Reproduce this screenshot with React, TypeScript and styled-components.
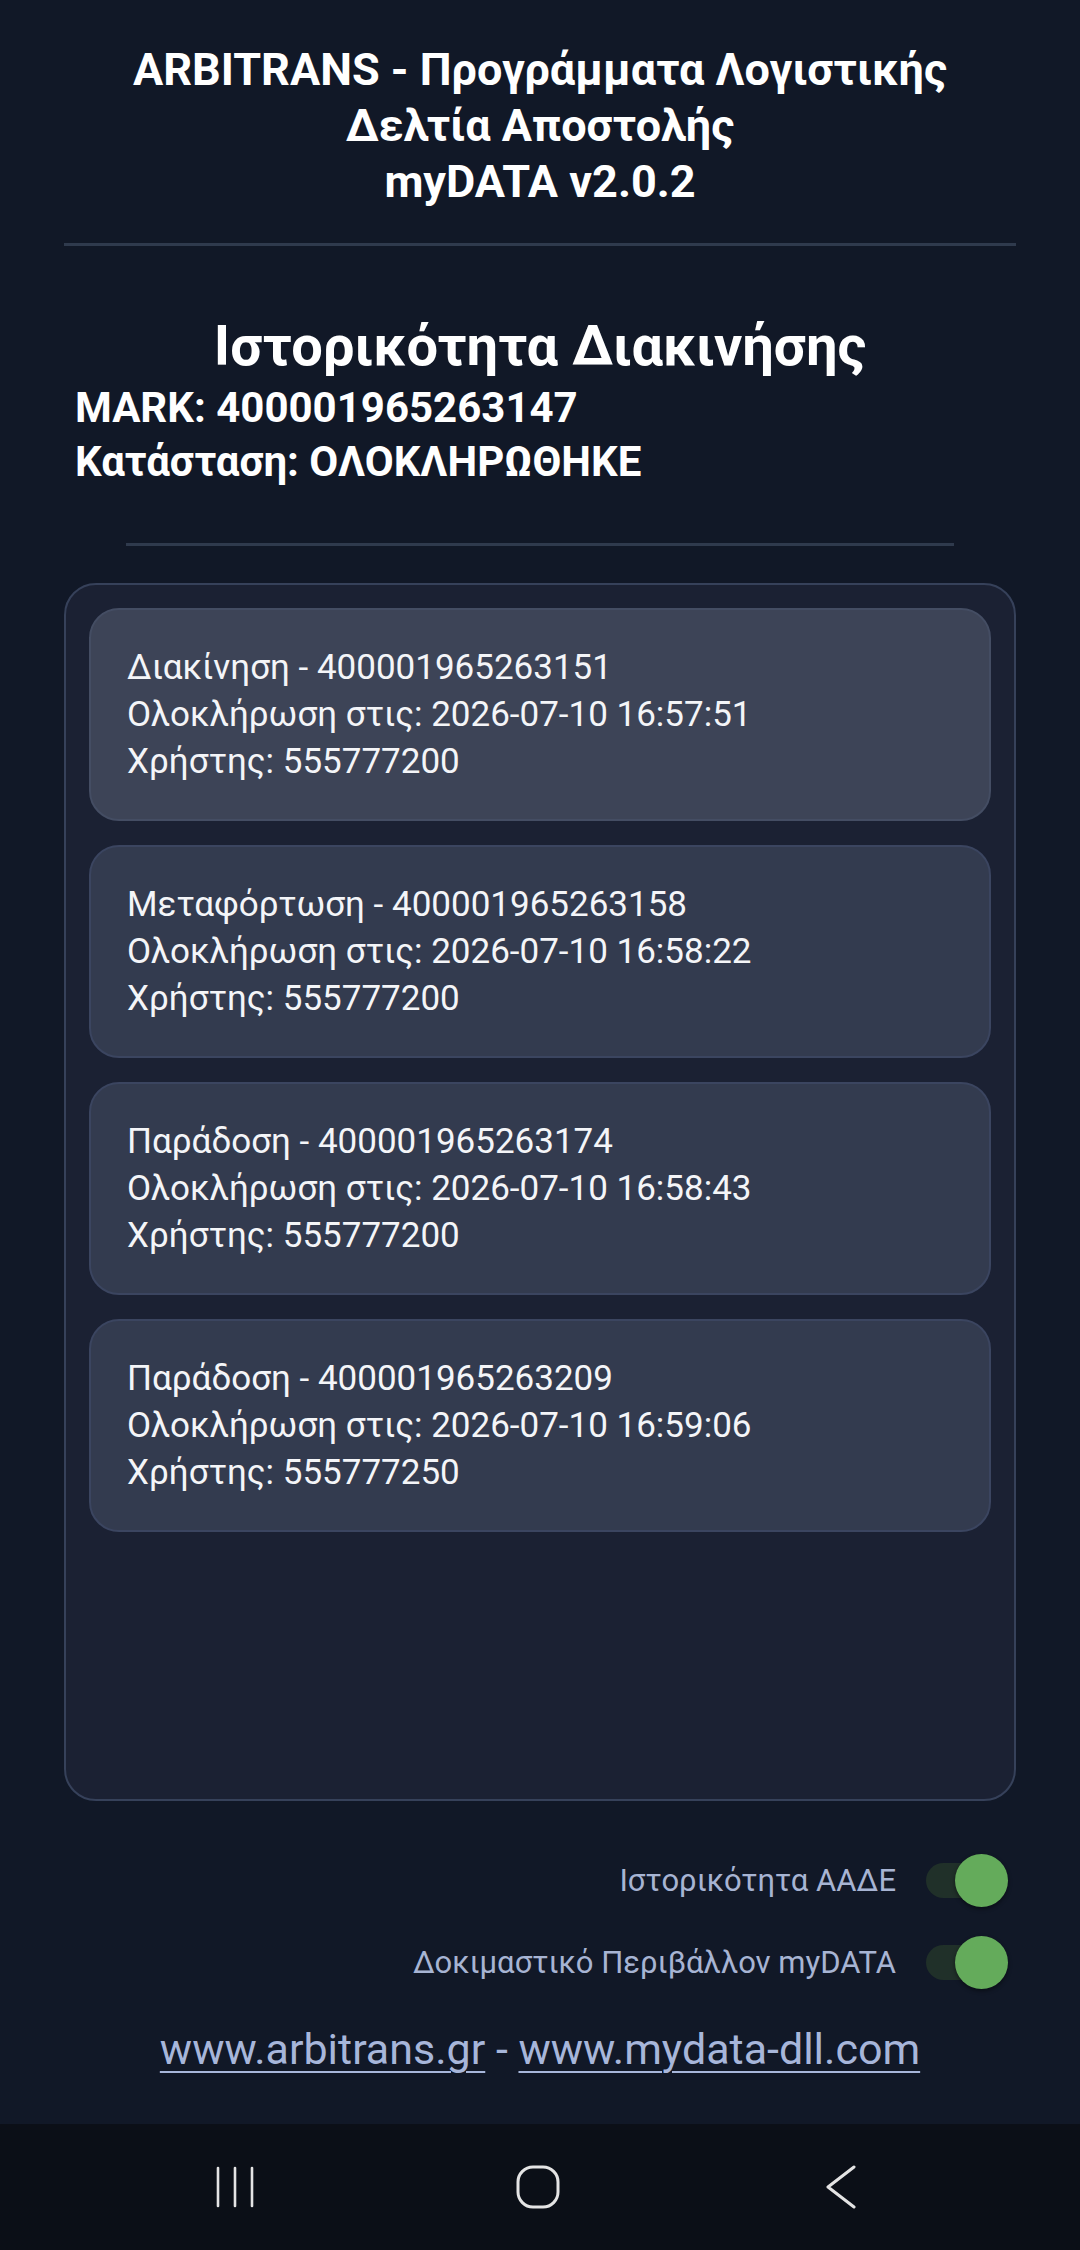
import styled, { createGlobalStyle } from 'styled-components';

const GlobalStyle = createGlobalStyle`
  html, body {
    margin: 0;
    padding: 0;
    background: #111827;
  }
  body {
    font-family: Roboto, "Noto Sans", "Liberation Sans", sans-serif;
    color: #ffffff;
  }
  * {
    box-sizing: border-box;
  }
`;

const movements = [
  { kind: 'Διακίνηση', mark: '400001965263151', done: '2026-07-10 16:57:51', user: '555777200' },
  { kind: 'Μεταφόρτωση', mark: '400001965263158', done: '2026-07-10 16:58:22', user: '555777200' },
  { kind: 'Παράδοση', mark: '400001965263174', done: '2026-07-10 16:58:43', user: '555777200' },
  { kind: 'Παράδοση', mark: '400001965263209', done: '2026-07-10 16:59:06', user: '555777250' },
];

const Toggle = ({ label }: { label: string }) => (
  <ToggleRow>
    <ToggleLabel>{label}</ToggleLabel>
    <Switch>
      <Track />
      <Thumb />
    </Switch>
  </ToggleRow>
);

export default function App() {
  return (
    <>
      <GlobalStyle />
      <Page>
        <Main>
          <Header>
            <HeaderLine>ARBITRANS - Προγράμματα Λογιστικής</HeaderLine>
            <HeaderLine>Δελτία Αποστολής</HeaderLine>
            <HeaderLine>myDATA v2.0.2</HeaderLine>
          </Header>
          <Divider />

          <Title>Ιστορικότητα Διακινήσης</Title>
          <InfoLine>MARK: 400001965263147</InfoLine>
          <InfoLine>Κατάσταση: ΟΛΟΚΛΗΡΩΘΗΚΕ</InfoLine>
          <Divider $inset />

          <ListBox>
            {movements.map((m, i) => (
              <Card key={m.mark} $active={i === 0}>
                <CardLine>{m.kind} - {m.mark}</CardLine>
                <CardLine>Ολοκλήρωση στις: {m.done}</CardLine>
                <CardLine>Χρήστης: {m.user}</CardLine>
              </Card>
            ))}
          </ListBox>

          <Toggles>
            <Toggle label="Ιστορικότητα ΑΑΔΕ" />
            <Toggle label="Δοκιμαστικό Περιβάλλον myDATA" />
          </Toggles>

          <Links>
            <Link href="#">www.arbitrans.gr</Link> - <Link href="#">www.mydata-dll.com</Link>
          </Links>
        </Main>

        <NavBar>
          <NavButton>
            <svg width="40" height="42" viewBox="0 0 40 42">
              <g stroke="#e4e4e4" strokeWidth="2.6" strokeLinecap="round">
                <line x1="3" y1="2" x2="3" y2="40" />
                <line x1="20" y1="2" x2="20" y2="40" />
                <line x1="37" y1="2" x2="37" y2="40" />
              </g>
            </svg>
          </NavButton>
          <NavButton>
            <svg width="44" height="44" viewBox="0 0 44 44">
              <rect x="2" y="2" width="40" height="40" rx="15" fill="none" stroke="#e4e4e4" strokeWidth="3" />
            </svg>
          </NavButton>
          <NavButton>
            <svg width="32" height="44" viewBox="0 0 32 44">
              <polyline points="29,2 3,22 29,42" fill="none" stroke="#e4e4e4" strokeWidth="3" strokeLinecap="round" strokeLinejoin="round" />
            </svg>
          </NavButton>
        </NavBar>
      </Page>
    </>
  );
}

const Page = styled.div`
  min-height: 2250px;
  display: flex;
  flex-direction: column;
  background: #111827;
`;

const Main = styled.main`
  flex: 1;
  display: flex;
  flex-direction: column;
  padding: 42px 64px 0 64px;
`;

const Header = styled.header`
  display: flex;
  flex-direction: column;
  align-items: center;
`;

const HeaderLine = styled.div`
  font-size: 45px;
  font-weight: 700;
  line-height: 56px;
  text-align: center;
  white-space: nowrap;
`;

const Divider = styled.hr<{ $inset?: boolean }>`
  border: none;
  height: 3px;
  background: #2f3a4d;
  width: ${p => (p.$inset ? '828px' : '100%')};
  margin: ${p => (p.$inset ? '54px auto 37px' : '33px 0 70px')};
`;

const Title = styled.h1`
  margin: 0 0 5px;
  font-size: 56px;
  font-weight: 700;
  line-height: 60px;
  text-align: center;
  white-space: nowrap;
`;

const InfoLine = styled.div`
  padding-left: 11px;
  font-size: 42px;
  font-weight: 700;
  line-height: 54px;
`;

const ListBox = styled.section`
  height: 1218px;
  display: flex;
  flex-direction: column;
  gap: 24px;
  padding: 23px;
  background: #1b2133;
  border: 2px solid #36415a;
  border-radius: 32px;
  overflow-y: auto;
`;

const Card = styled.div<{ $active?: boolean }>`
  flex: none;
  height: 213px;
  display: flex;
  flex-direction: column;
  justify-content: center;
  padding: 0 36px;
  background: ${p => (p.$active ? '#3d4457' : '#333b4f')};
  border: 2px solid ${p => (p.$active ? '#444d63' : '#3b4560')};
  border-radius: 30px;
`;

const CardLine = styled.div`
  font-size: 35px;
  line-height: 47px;
  color: #f4f5f8;
`;

const Toggles = styled.div`
  display: flex;
  flex-direction: column;
  gap: 29px;
  margin-top: 53px;
`;

const ToggleRow = styled.div`
  display: flex;
  justify-content: flex-end;
  align-items: center;
  gap: 30px;
  padding-right: 8px;
`;

const ToggleLabel = styled.span`
  font-size: 31px;
  color: #a7b4d3;
`;

const Switch = styled.div`
  position: relative;
  width: 82px;
  height: 53px;
  display: flex;
  align-items: center;
`;

const Track = styled.div`
  width: 75px;
  height: 35px;
  border-radius: 18px;
  background: #203029;
`;

const Thumb = styled.div`
  position: absolute;
  right: 0;
  top: 0;
  width: 53px;
  height: 53px;
  border-radius: 50%;
  background: #64ab5b;
  box-shadow: 0 2px 4px rgba(0, 0, 0, 0.45);
`;

const Links = styled.div`
  margin-top: 34px;
  text-align: center;
  font-size: 43px;
  line-height: 52px;
  color: #a7b6da;
  white-space: nowrap;
`;

const Link = styled.a`
  color: #a7b6da;
  text-decoration: underline;
  text-underline-offset: 7px;
  text-decoration-thickness: 2px;
`;

const NavBar = styled.nav`
  height: 126px;
  display: flex;
  justify-content: center;
  align-items: center;
  gap: 243px;
  background: #0b0f17;
  padding-right: 4px;
`;

const NavButton = styled.div`
  width: 60px;
  display: flex;
  justify-content: center;
  align-items: center;
`;
